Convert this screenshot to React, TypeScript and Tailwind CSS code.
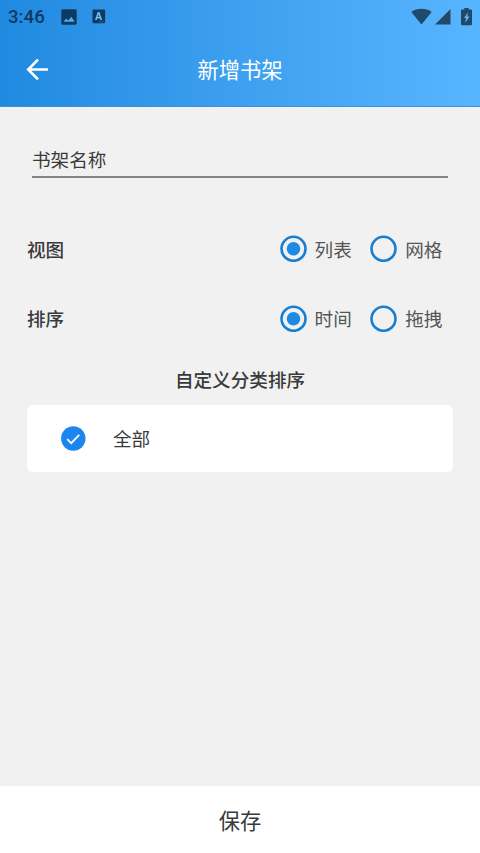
import React, { useState } from 'react';

const viewOptions = ['列表', '网格'];
const sortOptions = ['时间', '拖拽'];

const StatusBar = () => (
  <div className="flex h-8 items-center justify-between pl-2 pr-[8px] pt-px text-[#0d3a62]">
    <div className="flex items-center">
      <span className="w-[53px] font-['Roboto'] text-[18.700px] font-medium leading-8">3:46</span>
      <svg className="h-4 w-4" viewBox="0 0 16 16">
        <rect x="0.300" y="0.300" width="15.400" height="15.400" rx="1.400" fill="currentColor" />
        <path d="M2.500 12.800L5.200 9.500l2 2 3.200-3.800 3.300 5.100z" fill="#58a8e8" />
      </svg>
      <svg className="ml-[15px] h-[15px] w-[14px]" viewBox="0 0 14 15">
        <rect x="0.500" y="0.500" width="12.600" height="13.800" rx="1" fill="currentColor" />
        <text x="6.600" y="10.800" textAnchor="middle" className="font-['Roboto'] text-[10.500px] font-bold" fill="#7dc0f2">A</text>
        <path d="M6.500 12.800h5" stroke="#2f79b3" strokeWidth="0.700" />
      </svg>
    </div>
    <div className="flex items-center text-[#204a6c]">
      <svg className="h-[17px] w-[21px]" viewBox="0 0 21 17" fill="currentColor">
        <path d="M10.500 16.500 L0.300 3.900 C6 -0.400 15 -0.400 20.700 3.900z" />
      </svg>
      <svg className="ml-[3px] h-4 w-4" viewBox="0 0 16 16" fill="currentColor">
        <path d="M0 15.500 L15.500 0 V15.500z" />
      </svg>
      <svg className="ml-2.5 h-[18px] w-[11px]" viewBox="0 0 11 18">
        <path d="M3.300 0h4.400v1.500H10a1 1 0 0 1 1 1V16.300a1 1 0 0 1-1 1H1a1 1 0 0 1-1-1V2.500a1 1 0 0 1 1-1h2.300z" fill="currentColor" />
        <path d="M7.200 4.300 L3 10.100h2l-.9 4.900L8.600 8.400H6.400z" fill="#62b3f2" />
      </svg>
    </div>
  </div>
);

const Header = () => (
  <header className="h-[107px] border-b border-[#3c92d8] bg-linear-to-r from-[#1e8ae0] to-[#58b5ff]">
    <StatusBar />
    <div className="grid h-[74px] grid-cols-[80px_1fr_80px] items-center">
      <button aria-label="返回" className="pl-[26px] text-white">
        <svg className="h-[22px] w-[22px]" viewBox="0 0 22 22" fill="none" stroke="currentColor" strokeWidth="2.600">
          <path d="M22 11.500H2.200M12 1.700L2.200 11.500l9.800 9.800" />
        </svg>
      </button>
      <h1 className="text-center text-[21.300px] text-white">新增书架</h1>
    </div>
  </header>
);

type OptionRowProps = {
  label: string;
  options: string[];
};

const OptionRow = ({ label, options }: OptionRowProps) => {
  const [selected, setSelected] = useState(options[0]);

  return (
    <div className="flex h-[69.500px] items-center justify-between pl-[27px] pr-[37.600px]">
      <span className="font-medium">{label}</span>
      <div className="flex gap-[18.400px]">
        {options.map(option => (
          <button key={option} onClick={() => setSelected(option)} className="flex items-center gap-2 text-[#555]">
            <svg className="h-[27px] w-[27px]" viewBox="0 0 27 27" fill="none">
              <circle cx="13.500" cy="13.800" r="12" stroke="#187fd0" strokeWidth="2.600" />
              {selected === option && <circle cx="13.500" cy="13.800" r="6.800" fill="#1e8ae3" />}
            </svg>
            <span>{option}</span>
          </button>
        ))}
      </div>
    </div>
  );
};

const App = () => {
  return (
    <div className="flex h-[853px] w-[480px] flex-col bg-[#f1f1f1] font-['Noto_Sans_CJK_SC',sans-serif] text-[18.600px] text-[#3a3a3a]">
      <Header />

      <main className="flex-1">
        <div className="mx-8 mt-[35px] flex h-9 items-center border-b-2 border-[#848484]">
          <span>书架名称</span>
        </div>

        <div className="mt-9">
          <OptionRow label="视图" options={viewOptions} />
          <OptionRow label="排序" options={sortOptions} />
        </div>

        <h2 className="mt-[12px] text-center leading-7 font-medium">自定义分类排序</h2>

        <div className="mx-[27px] mt-3 flex h-[66.500px] items-center rounded-md bg-white pl-[34px]">
          <svg className="h-[25px] w-[25px]" viewBox="0 0 25 25" fill="none">
            <circle cx="12.300" cy="12.500" r="12.200" fill="#1c86ee" />
            <path d="M6.200 13.200l4 4 8-8.300" stroke="#fff" strokeWidth="1.800" />
          </svg>
          <span className="ml-[27px]">全部</span>
        </div>
      </main>

      <button className="h-[67px] bg-white text-[21.300px]">保存</button>
    </div>
  );
};

export default App;
